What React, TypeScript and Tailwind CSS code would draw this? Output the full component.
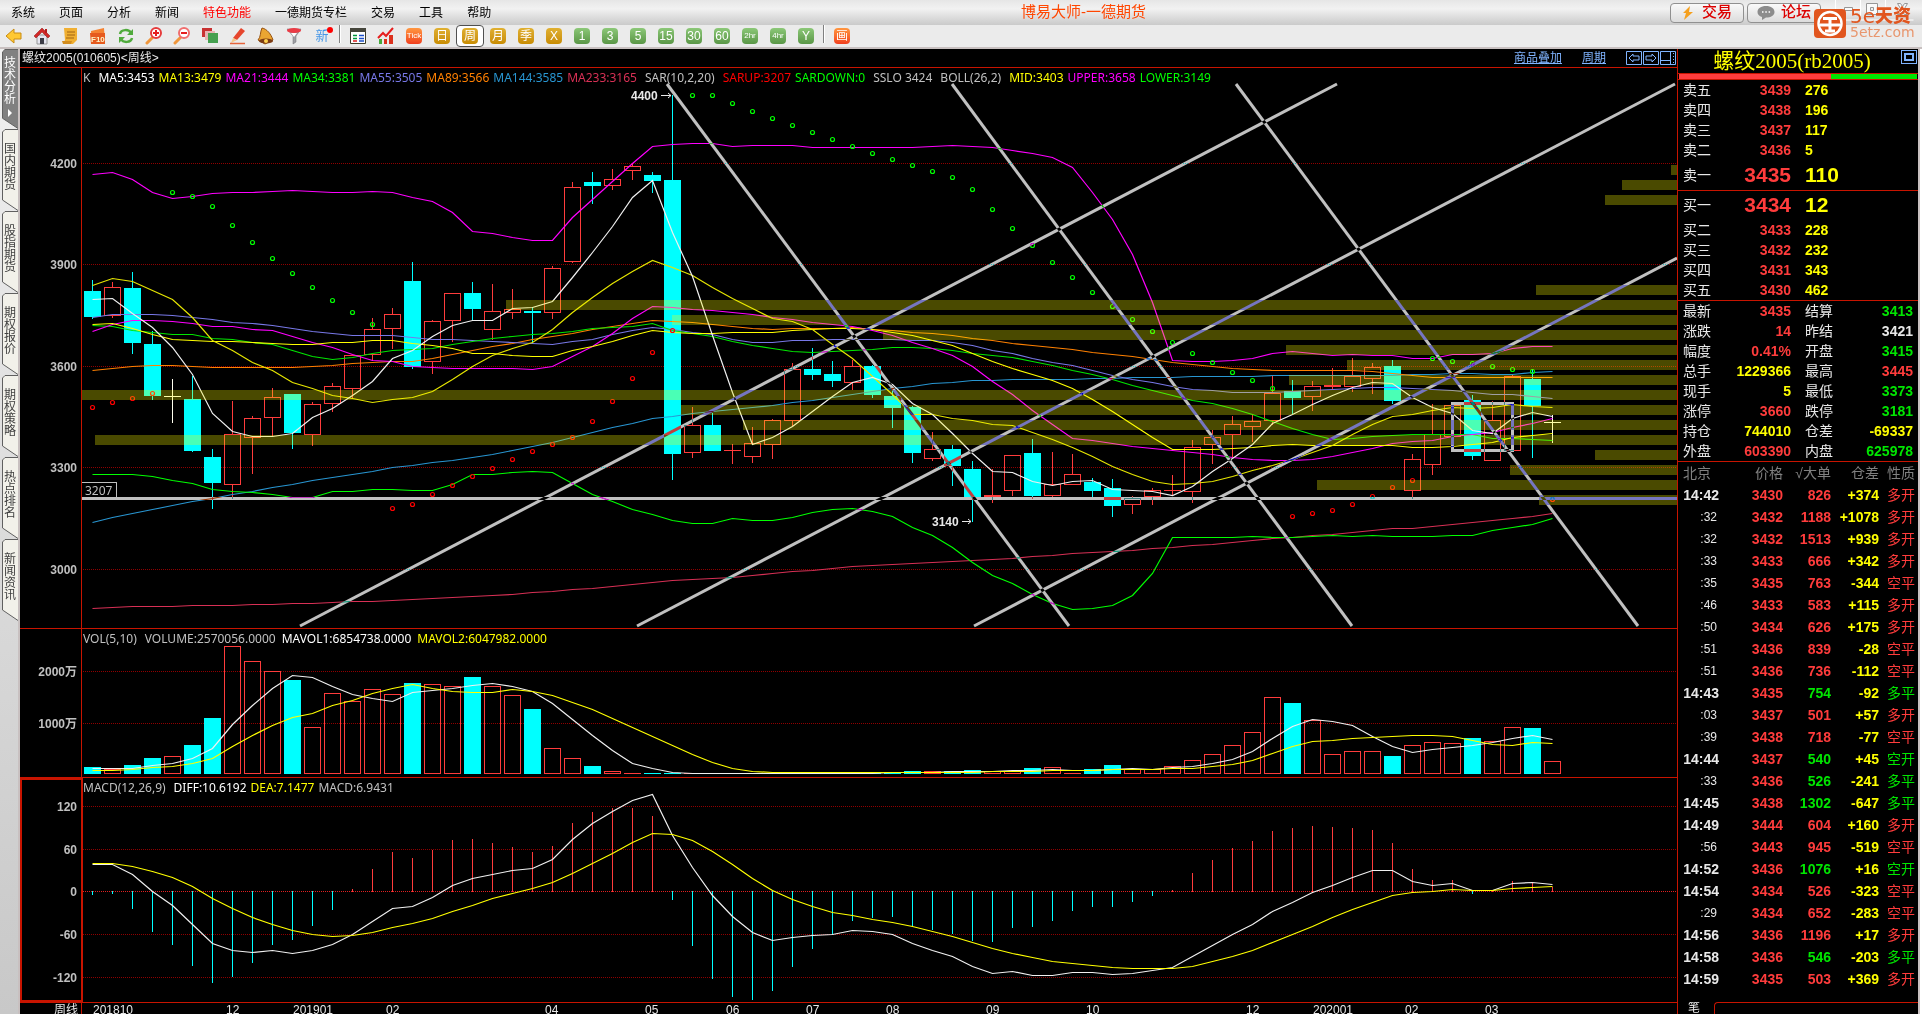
import type { ReactNode } from "react";
import clsx from "clsx";

const STEP = 20;
const FIRST_X = 92;

const xAt = (i: number) => FIRST_X + i * STEP;

/* u: rising, d: falling, f: flat; then high, body top, body bottom, low */
type Candle = ["u" | "d" | "f", number, number, number, number];

const candles: Candle[] = [
  ["d", 280, 291, 317, 319], ["u", 282, 287, 316, 318], ["d", 272, 288, 343, 354], ["d", 331, 344, 396, 400],
  ["f", 379, 396, 397, 423], ["d", 376, 399, 451, 452], ["d", 449, 457, 483, 509], ["u", 401, 434, 485, 499],
  ["u", 416, 418, 438, 474], ["u", 388, 397, 418, 437], ["d", 394, 394, 433, 449], ["u", 402, 404, 435, 446],
  ["u", 383, 386, 404, 412], ["u", 355, 355, 389, 398], ["u", 318, 329, 355, 361], ["u", 308, 314, 329, 349],
  ["d", 262, 281, 367, 369], ["u", 320, 321, 362, 374], ["u", 293, 293, 321, 342], ["d", 282, 293, 309, 321],
  ["u", 284, 311, 330, 340], ["u", 289, 309, 313, 319], ["d", 307, 311, 313, 343], ["u", 266, 268, 313, 319],
  ["u", 182, 187, 262, 263], ["d", 172, 182, 186, 204], ["u", 169, 179, 186, 190], ["u", 163, 166, 171, 180],
  ["d", 172, 175, 181, 193], ["d", 95, 180, 454, 480], ["u", 407, 425, 453, 458], ["d", 413, 425, 451, 451],
  ["u", 444, 450, 451, 464], ["u", 427, 443, 457, 463], ["u", 419, 420, 445, 459], ["u", 363, 369, 421, 426],
  ["d", 348, 369, 375, 380], ["d", 361, 374, 381, 387], ["u", 360, 366, 383, 390], ["d", 365, 366, 395, 398],
  ["d", 388, 396, 408, 428], ["d", 406, 407, 453, 463], ["u", 432, 449, 459, 461], ["d", 445, 449, 466, 486],
  ["d", 461, 469, 497, 522], ["u", 469, 495, 497, 503], ["u", 455, 455, 491, 496], ["d", 439, 453, 496, 499],
  ["u", 452, 484, 496, 497], ["u", 454, 474, 485, 485], ["d", 478, 482, 491, 497], ["d", 479, 488, 506, 517],
  ["u", 496, 498, 505, 514], ["u", 488, 490, 497, 505], ["u", 475, 490, 491, 495], ["u", 440, 447, 492, 503],
  ["u", 430, 437, 445, 464], ["u", 416, 424, 435, 457], ["u", 414, 421, 427, 442], ["u", 376, 393, 421, 425],
  ["d", 380, 391, 398, 414], ["u", 381, 386, 397, 411], ["u", 368, 385, 387, 389], ["u", 358, 376, 387, 392],
  ["u", 363, 367, 379, 394], ["d", 360, 366, 401, 404], ["u", 454, 459, 491, 499], ["u", 404, 434, 465, 475],
  ["u", 405, 405, 437, 437], ["d", 395, 400, 456, 460], ["u", 401, 420, 461, 461], ["u", 375, 376, 451, 451],
  ["d", 369, 379, 406, 458], ["f", 415, 422, 423, 443],
];

const ma5 = [
  299, 298, 313, 327, 347, 374, 413, 431, 436, 436,
  433, 417, 408, 395, 381, 358, 350, 336, 325, 320,
  320, 308, 307, 301, 277, 252, 226, 197, 180, 232,
  276, 335, 392, 444, 437, 426, 411, 396, 382, 377,
  384, 403, 414, 433, 453, 471, 472, 481, 485, 481,
  480, 489, 490, 491, 495, 486, 471, 458, 444, 423,
  414, 404, 395, 387, 382, 383, 397, 407, 413, 430,
  433, 418, 412, 416,
];
const ma13 = [
  285, 278, 281, 290, 299, 317, 340, 350, 362, 370,
  382, 388, 395, 398, 402, 399, 397, 391, 379, 366,
  355, 348, 342, 329, 312, 297, 283, 271, 260, 267,
  275, 287, 298, 308, 318, 321, 329, 344, 358, 376,
  394, 414, 414, 418, 420, 424, 425, 432, 439, 447,
  456, 466, 474, 481, 484, 483, 481, 476, 470, 465,
  459, 452, 445, 434, 424, 416, 414, 410, 407, 408,
  407, 404, 406, 407,
];
const mid = [
  324, 323, 328, 334, 339, 340, 341, 341, 342, 343,
  344, 344, 342, 342, 340, 340, 343, 345, 348, 353,
  353, 355, 356, 356, 350, 346, 341, 335, 330, 332,
  333, 333, 332, 332, 332, 330, 329, 328, 328, 329,
  332, 335, 340, 345, 353, 361, 368, 374, 380, 388,
  399, 411, 424, 437, 449, 449, 449, 448, 447, 445,
  444, 445, 445, 445, 445, 445, 447, 447, 446, 444,
  442, 437, 435, 433,
];
const ma21 = [
  331, 324, 320, 320, 321, 323, 326, 326, 329, 330,
  336, 342, 347, 354, 360, 361, 366, 367, 368, 368,
  368, 368, 369, 366, 356, 346, 333, 318, 306, 307,
  309, 310, 312, 314, 317, 319, 322, 324, 326, 330,
  335, 342, 348, 355, 366, 381, 394, 410, 424, 438,
  440, 443, 446, 448, 450, 452, 454, 457, 459, 460,
  460, 459, 456, 452, 448, 443, 441, 440, 436, 434,
  432, 427, 423, 418,
];
const ma34 = [
  325, 326, 330, 332, 334, 334, 338, 339, 342, 344,
  350, 356, 359, 357, 353, 350, 349, 348, 344, 341,
  338, 336, 334, 333, 331, 328, 327, 326, 323, 330,
  333, 336, 341, 345, 348, 351, 352, 351, 350, 349,
  347, 347, 348, 350, 353, 355, 357, 361, 365, 370,
  374, 379, 385, 390, 395, 400, 403, 408, 414, 421,
  428, 434, 439, 438, 436, 435, 434, 434, 434, 434,
  438, 438, 439, 440,
];
const ma55 = [
  317, 314, 314, 314, 315, 317, 319, 322, 323, 325,
  328, 331, 333, 335, 335, 335, 337, 339, 339, 340,
  341, 342, 343, 344, 341, 339, 334, 330, 327, 329,
  332, 334, 339, 342, 342, 340, 340, 339, 339, 339,
  339, 340, 340, 342, 345, 350, 353, 358, 362, 365,
  370, 375, 379, 382, 386, 389, 390, 392, 392, 392,
  391, 390, 389, 388, 387, 387, 388, 389, 390, 392,
  394, 394, 396, 398,
];
const ma89 = [
  370, 368, 366, 365, 365, 366, 367, 367, 367, 367,
  367, 366, 365, 363, 362, 361, 361, 358, 354, 350,
  346, 343, 339, 336, 333, 329, 326, 323, 320, 321,
  322, 324, 326, 328, 329, 328, 328, 328, 327, 329,
  330, 332, 333, 335, 338, 340, 343, 345, 347, 349,
  352, 354, 356, 359, 362, 364, 366, 368, 369, 370,
  370, 370, 370, 370, 371, 373, 375, 377, 377, 377,
  377, 377, 377, 377,
];
const ma144 = [
  522, 517, 513, 509, 505, 501, 498, 494, 491, 487,
  484, 480, 477, 474, 471, 467, 465, 462, 460, 457,
  454, 450, 446, 442, 437, 432, 427, 423, 418, 416,
  413, 411, 409, 407, 405, 402, 400, 397, 394, 391,
  388, 386, 383, 382, 380, 380, 379, 379, 379, 379,
  378, 378, 377, 377, 377, 376, 376, 376, 376, 375,
  375, 375, 375, 375, 375, 375, 374, 374, 373, 373,
  374, 374, 372, 371,
];
const ma233 = [
  608, 607, 606, 606, 606, 605, 605, 605, 604, 604,
  603, 603, 602, 601, 601, 600, 599, 598, 597, 596,
  595, 594, 592, 591, 589, 588, 586, 584, 582, 580,
  579, 578, 577, 575, 573, 571, 570, 568, 566, 565,
  564, 563, 562, 561, 560, 559, 558, 556, 555, 553,
  552, 551, 550, 548, 547, 545, 544, 542, 540, 538,
  537, 535, 534, 532, 530, 528, 528, 526, 524, 522,
  520, 518, 516, 513,
];
const upper = [
  174, 172, 179, 192, 198, 196, 193, 192, 192, 191,
  190, 191, 192, 192, 191, 192, 197, 201, 212, 231,
  233, 237, 240, 240, 217, 199, 181, 163, 146, 144,
  143, 143, 146, 145, 145, 145, 147, 147, 147, 147,
  147, 147, 146, 145, 146, 147, 150, 153, 157, 167,
  192, 219, 254, 302, 360, 361, 361, 360, 358, 353,
  351, 353, 355, 354, 355, 355, 358, 358, 354, 354,
  353, 348, 346, 346,
];
const lower = [
  474, 474, 474, 476, 480, 483, 489, 491, 492, 494,
  497, 497, 491, 491, 489, 489, 490, 490, 484, 474,
  474, 472, 471, 472, 483, 494, 501, 509, 514, 520,
  523, 523, 518, 520, 520, 517, 512, 509, 508, 511,
  516, 527, 535, 547, 562, 575, 583, 594, 603, 609,
  608, 605, 595, 573, 537, 537, 537, 537, 536, 537,
  537, 536, 535, 536, 535, 536, 536, 536, 535, 535,
  530, 527, 524, 518,
];

/* SAR dots: [candle index, y] */
const sarGreen: [number, number[]][] = [
  [4, [192, 196, 206, 225, 242, 258, 273, 287, 300, 312, 324]],
  [30, [
    95, 95, 103, 111, 118, 125, 132, 139, 146, 153, 159, 165, 171, 177, 189,
    209, 228, 245, 262, 277, 292, 306, 319, 331, 342, 353, 362, 372, 380, 388,
  ]],
  [67, [358, 361, 363, 366, 369, 371]],
];
const sarRed: [number, number[]][] = [
  [0, [407, 402, 398, 393]],
  [15, [508, 504, 494, 485, 476, 468, 459, 451, 444, 437, 421, 401, 378, 352, 330]],
  [60, [516, 513, 510, 504, 496, 487, 480]],
  [73, [499]],
];

/* Volume profile at the right edge: [y, left edge] */
const profile: [number, number][] = [
  [165, 1671], [180, 1622], [195, 1605], [285, 1536], [300, 506], [315, 672],
  [330, 883], [345, 1286], [360, 1347], [375, 1289], [390, 82], [405, 681],
  [420, 743], [435, 95], [450, 1595], [465, 1510], [480, 1317], [495, 1539],
];

const volumeTops = [
  767, 769, 765, 758, 756, 745, 718, 646, 661, 671,
  680, 727, 693, 701, 689, 694, 683, 684, 686, 677,
  686, 695, 709, 748, 758, 766, 771, 773, 773, 773,
  773, 773, 773, 773, 773, 773, 773, 773, 773, 773,
  772, 771, 771, 771, 770, 771, 771, 768, 767, 773,
  769, 765, 769, 769, 766, 760, 754, 745, 732, 697,
  703, 720, 754, 751, 751, 756, 745, 742, 743, 738,
  741, 727, 728, 761,
];
const mavol1 = [
  768, 768, 768, 765, 763, 758, 748, 724, 705, 688,
  675, 677, 686, 694, 698, 701, 692, 690, 688, 685,
  683, 686, 691, 703, 719, 735, 750, 763, 768, 772,
  773, 773, 773, 773, 773, 773, 773, 773, 773, 773,
  772, 772, 772, 771, 771, 771, 770, 770, 769, 770,
  770, 769, 768, 769, 767, 766, 763, 759, 751, 738,
  726, 719, 721, 725, 736, 746, 752, 749, 747, 745,
  742, 738, 735, 739,
];
const mavol2 = [
  770, 770, 769, 767, 766, 763, 758, 746, 735, 725,
  717, 713, 705, 700, 693, 688, 684, 688, 691, 692,
  692, 689, 691, 695, 702, 709, 718, 727, 736, 745,
  754, 762, 768, 771, 772, 772, 772, 772, 772, 772,
  772, 772, 772, 772, 772, 771, 771, 771, 770, 770,
  770, 769, 769, 769, 768, 768, 766, 764, 760, 753,
  746, 741, 740, 738, 737, 736, 735, 735, 736, 740,
  744, 745, 742, 743,
];

const MACD_ZERO = 891;
const macd = [
  894, 893, 908, 931, 944, 965, 982, 976, 962, 944,
  939, 925, 909, 889, 869, 852, 858, 850, 840, 839,
  843, 847, 852, 846, 823, 812, 808, 808, 816, 899,
  945, 978, 996, 999, 990, 966, 948, 934, 920, 917,
  916, 926, 929, 933, 940, 941, 927, 926, 920, 910,
  906, 901, 895, 890, 873, 860, 848, 841, 831, 828,
  826, 827, 828, 830, 843, 869, 880, 880, 893, 892,
  881, 882, 887, 887,
];
const diff = [
  864, 864, 874, 891, 905, 924, 943, 950, 952, 950,
  953, 950, 944, 934, 921, 908, 906, 897, 885, 878,
  874, 870, 868, 859, 839, 823, 811, 800, 794, 835,
  867, 895, 916, 932, 940, 937, 935, 934, 930, 931,
  934, 943, 950, 956, 966, 973, 971, 975, 975, 972,
  972, 974, 973, 970, 967, 956, 945, 934, 924, 911,
  902, 892, 885, 877, 870, 870, 881, 885, 883, 890,
  890, 883, 882, 884,
];
const dea = [
  863, 863, 866, 871, 877, 886, 898, 908, 917, 924,
  930, 934, 936, 935, 932, 927, 923, 918, 911, 905,
  898, 893, 888, 882, 873, 863, 853, 842, 833, 834,
  840, 851, 864, 878, 890, 899, 906, 912, 915, 919,
  922, 926, 931, 936, 942, 948, 953, 957, 961, 963,
  965, 967, 968, 968, 968, 966, 961, 956, 950, 942,
  934, 926, 917, 909, 902, 895, 892, 891, 889, 890,
  890, 888, 887, 886,
];
/* bars from the 51st week on, where the histogram turns positive again */
const macdTail = [906, 901, 895, 890, 873, 860, 848, 841, 831, 828, 826, 827, 828, 830, 843, 869, 880, 880, 893, 891, 881, 882, 887];
const histogram = [...macd.slice(0, 51), ...macdTail];

const months: [number, string][] = [
  [93, "201810"], [226, "12"], [293, "201901"], [386, "02"], [545, "04"],
  [645, "05"], [726, "06"], [806, "07"], [886, "08"], [986, "09"],
  [1086, "10"], [1246, "12"], [1313, "202001"], [1405, "02"], [1485, "03"],
];

const menu = ["系统", "页面", "分析", "新闻", "特色功能", "一德期货专栏", "交易", "工具", "帮助"];
const sideTabs = ["国内期货", "股指期货", "期权报价", "期权策略", "热点排名", "新闻资讯"];

const RED = "text-[#ff3c3c]";
const GREEN = "text-[#00e600]";
const YELLOW = "text-[#ffff00]";
const WHITE = "text-[#e8e8e8]";

const asks: [string, string, string][] = [
  ["卖五", "3439", "276"],
  ["卖四", "3438", "196"],
  ["卖三", "3437", "117"],
  ["卖二", "3436", "5"],
];
const bids: [string, string, string][] = [
  ["买二", "3433", "228"],
  ["买三", "3432", "232"],
  ["买四", "3431", "343"],
  ["买五", "3430", "462"],
];

const stats: [string, string, string, string, string, string][] = [
  ["最新", "3435", RED, "结算", "3413", GREEN],
  ["涨跌", "14", RED, "昨结", "3421", WHITE],
  ["幅度", "0.41%", RED, "开盘", "3415", GREEN],
  ["总手", "1229366", YELLOW, "最高", "3445", RED],
  ["现手", "5", YELLOW, "最低", "3373", GREEN],
  ["涨停", "3660", RED, "跌停", "3181", GREEN],
  ["持仓", "744010", YELLOW, "仓差", "-69337", YELLOW],
  ["外盘", "603390", RED, "内盘", "625978", GREEN],
];

/* time, price, size, position change, kind */
const ticks: [string, string, string, string, string][] = [
  ["14:42", "3430", "826", "+374", "多开"],
  [":32", "3432", "1188", "+1078", "多开"],
  [":32", "3432", "1513", "+939", "多开"],
  [":33", "3433", "666", "+342", "多开"],
  [":35", "3435", "763", "-344", "空平"],
  [":46", "3433", "583", "+115", "多开"],
  [":50", "3434", "626", "+175", "多开"],
  [":51", "3436", "839", "-28", "空平"],
  [":51", "3436", "736", "-112", "空平"],
  ["14:43", "3435", "754", "-92", "多平"],
  [":03", "3437", "501", "+57", "多开"],
  [":39", "3438", "718", "-77", "空平"],
  ["14:44", "3437", "540", "+45", "空开"],
  [":33", "3436", "526", "-241", "多平"],
  ["14:45", "3438", "1302", "-647", "多平"],
  ["14:49", "3444", "604", "+160", "多开"],
  [":56", "3443", "945", "-519", "空平"],
  ["14:52", "3436", "1076", "+16", "空开"],
  ["14:54", "3434", "526", "-323", "空平"],
  [":29", "3434", "652", "-283", "空平"],
  ["14:56", "3436", "1196", "+17", "多开"],
  ["14:58", "3436", "546", "-203", "多平"],
  ["14:59", "3435", "503", "+369", "多开"],
];

function Curve({ data, color }: { data: number[]; color: string }) {
  const points = data.map((y, i) => `${xAt(i) + 0.5},${y + 0.5}`).join(" ");
  return <polyline points={points} fill="none" stroke={color} strokeWidth="1.2" />;
}

function GridLine({ y, label, color = "#900000" }: { y: number; label: string; color?: string }) {
  return (
    <>
      <line x1="83" x2="1677" y1={y + 0.5} y2={y + 0.5} stroke={color} strokeDasharray="1 1" shapeRendering="crispEdges" />
      <text x="77" y={y + 5} textAnchor="end" fill="#c0c0c0" fontSize="12" fontWeight="bold">
        {label}
      </text>
    </>
  );
}

function CandleShape({ i, candle }: { i: number; candle: Candle }) {
  const [kind, high, top, bottom, low] = candle;
  const x = xAt(i);
  if (kind === "f") {
    return (
      <g fill="#fffff0">
        <rect x={x} y={high} width="1" height={low - high} />
        <rect x={x - 8} y={top} width="17" height="1" />
      </g>
    );
  }
  if (kind === "d") {
    return (
      <g fill="#00ffff">
        <rect x={x} y={high} width="1" height={low - high} />
        <rect x={x - 8} y={top} width="17" height={bottom - top} />
      </g>
    );
  }
  return (
    <g fill="#ff3c3c">
      <rect x={x} y={high} width="1" height={top - high} />
      <rect x={x} y={bottom} width="1" height={Math.max(low - bottom, 0)} />
      <rect x={x - 7.5} y={top + 0.5} width="16" height={Math.max(bottom - top - 1, 0.1)} fill="none" stroke="#ff3c3c" />
    </g>
  );
}

function Dots({ runs, color }: { runs: [number, number[]][]; color: string }) {
  return (
    <g fill="none" stroke={color} strokeWidth="1.2">
      {runs.map(([start, ys]) =>
        ys.map((y, k) => <circle key={start + k} cx={xAt(start + k) + 0.5} cy={y + 0.5} r="2" />),
      )}
    </g>
  );
}

function PricePane() {
  return (
    <svg className="block h-full w-full" viewBox="20 68 1657 560" preserveAspectRatio="none">
      <GridLine y={163} label="4200" />
      <GridLine y={264} label="3900" />
      <GridLine y={366} label="3600" />
      <GridLine y={467} label="3300" />
      <GridLine y={569} label="3000" />
      <g shapeRendering="crispEdges">
        {candles.map((c, i) => (
          <CandleShape key={i} i={i} candle={c} />
        ))}
      </g>
      <Curve data={ma233} color="#d83055" />
      <Curve data={ma144} color="#2896d2" />
      <Curve data={ma89} color="#ff8000" />
      <Curve data={ma55} color="#7878e8" />
      <Curve data={ma34} color="#00e600" />
      <Curve data={ma21} color="#ff00ff" />
      <Curve data={mid} color="#ffff00" />
      <Curve data={ma13} color="#e6e600" />
      <Curve data={ma5} color="#f0f0f0" />
      <Curve data={upper} color="#ff00ff" />
      <Curve data={lower} color="#00ff00" />
      <Dots runs={sarGreen} color="#00ff00" />
      <Dots runs={sarRed} color="#ff0000" />
      <g fill="#ffff00" fillOpacity="0.29" shapeRendering="crispEdges">
        {profile.map(([y, x]) => (
          <rect key={y} x={x} y={y} width={1677 - x} height="10" />
        ))}
      </g>
      <g fill="none" stroke="#c0c0c0" strokeWidth="3">
        {/* each drawn line inverts what lies under it */}
        <path className="mix-blend-difference" d="M81 498.5H1677" />
        <path className="mix-blend-difference" d="M667 84L1069 626" />
        <path className="mix-blend-difference" d="M952 84L1352 626" />
        <path className="mix-blend-difference" d="M1236 84L1638 626" />
        <path className="mix-blend-difference" d="M300 626L1337 84" />
        <path className="mix-blend-difference" d="M637 626L1675 84" />
        <path className="mix-blend-difference" d="M974 626L1677 258" />
        <rect className="mix-blend-difference" x="1452.5" y="403.5" width="60" height="47" />
      </g>
      <rect x="81.5" y="482.5" width="35" height="15" fill="#000" stroke="#c0c0c0" />
      <text x="85" y="495" fill="#c0c0c0" fontSize="12" className="font-['Noto_Sans']">3207</text>
      <g fill="#e8e8e8" fontSize="12" fontWeight="bold">
        <text x="631" y="100">4400</text>
        <text x="932" y="526">3140</text>
      </g>
      <path d="M661 95.5h10M668 93l3 2.5l-3 2.5M962 521.5h9M968 519l3 2.5l-3 2.5" fill="none" stroke="#e8e8e8" />
      <path d="M81.5 68V628" stroke="#c81400" />
    </svg>
  );
}

function VolumePane() {
  return (
    <svg className="block h-full w-full" viewBox="20 629 1657 148" preserveAspectRatio="none">
      <GridLine y={671} label="2000万" />
      <GridLine y={723} label="1000万" />
      <g shapeRendering="crispEdges">
        {volumeTops.map((y, i) =>
          candles[i][0] === "d" ? (
            <rect key={i} x={xAt(i) - 8} y={y} width="17" height={774 - y} fill="#00ffff" />
          ) : (
            <rect key={i} x={xAt(i) - 7.5} y={y + 0.5} width="16" height={Math.max(773 - y, 0.1)} fill="none" stroke="#ff3c3c" />
          ),
        )}
      </g>
      <Curve data={mavol1} color="#f0f0f0" />
      <Curve data={mavol2} color="#ffff00" />
      <path d="M81.5 629V777" stroke="#c81400" />
    </svg>
  );
}

function MacdPane() {
  return (
    <svg className="block h-full w-full" viewBox="20 778 1657 224" preserveAspectRatio="none">
      <GridLine y={806} label="120" />
      <GridLine y={849} label="60" />
      <GridLine y={MACD_ZERO} label="0" color="#e02020" />
      <GridLine y={934} label="-60" />
      <GridLine y={977} label="-120" />
      <g shapeRendering="crispEdges">
        {histogram.map((y, i) => (
          <rect
            key={i}
            x={xAt(i)}
            y={Math.min(y, MACD_ZERO)}
            width="1"
            height={Math.abs(y - MACD_ZERO) + 1}
            fill={y > MACD_ZERO ? "#00ffff" : "#ff3c3c"}
          />
        ))}
      </g>
      <Curve data={diff} color="#f0f0f0" />
      <Curve data={dea} color="#ffff00" />
      <rect x="21" y="779" width="61" height="222" fill="none" stroke="#c81400" strokeWidth="2" />
    </svg>
  );
}

function Legend({ items }: { items: [string, string][] }) {
  return (
    <div className="absolute left-[63px] top-0 flex h-5 items-center gap-1 whitespace-nowrap font-['Noto_Sans',sans-serif] text-[12px]">
      {items.map(([text, cls]) => (
        <span key={text} className={cls}>
          {text}
        </span>
      ))}
    </div>
  );
}

const priceLegend: [string, string][] = [
  ["K", "text-[#c0c0c0] mr-1"],
  ["MA5:3453", "text-white"],
  ["MA13:3479", "text-[#ffff00]"],
  ["MA21:3444", "text-[#ff00ff]"],
  ["MA34:3381", "text-[#00ff00]"],
  ["MA55:3505", "text-[#7878e8]"],
  ["MA89:3566", "text-[#ff8000]"],
  ["MA144:3585", "text-[#2896d2]"],
  ["MA233:3165", "text-[#d83055]"],
  ["SAR(10,2,20)", "text-[#c0c0c0] mx-1"],
  ["SARUP:3207", "text-[#ff0000]"],
  ["SARDOWN:0", "text-[#00ff00]"],
  ["SSLO 3424", "text-[#c0c0c0] mx-1"],
  ["BOLL(26,2)", "text-[#c0c0c0] mr-1"],
  ["MID:3403", "text-[#ffff00]"],
  ["UPPER:3658", "text-[#ff00ff]"],
  ["LOWER:3149", "text-[#00ff00]"],
];

function Glyph({ children }: { children: ReactNode }) {
  return (
    <svg className="size-[18px]" viewBox="0 0 18 18">
      {children}
    </svg>
  );
}

const tools: [string, ReactNode][] = [
  ["后退", <path d="M1 9l8-7v4h7v6H9v4z" fill="#ffc832" stroke="#c88c14" />],
  ["主页", <><path d="M4 8h10v9H4z" fill="#e6e6f0" stroke="#969696" /><path d="M1 9l8-8 8 8-2 2-6-6-6 6z" fill="#d22828" stroke="#8c1414" strokeWidth=".5" /><path d="M12 2h2v4h-2z" fill="#b41e1e" /><path d="M7 11h4v6H7z" fill="#3c3c46" /></>],
  ["公告", <><path d="M3 1h13v12l-4 4H2l2-4z" fill="#f0af32" /><path d="M6 5h8M6 8h8M5 11h8" stroke="#a06414" /><path d="M1 14h10l-1 3H2z" fill="#d28c1e" /></>],
  ["F10", <><path d="M2 4l13-3 1 14-13 2z" fill="#f58232" /><path d="M1 6h15v11H2z" fill="#e65a1e" /><text x="2" y="15" fontSize="8" fontWeight="bold" fill="#fff5c8">F10</text></>],
  ["刷新", <><path d="M3 7c1-5 9-5 11-1M15 11c-1 5-9 5-11 1" fill="none" stroke="#50aa3c" strokeWidth="2.5" /><path d="M16 2v6h-6zM2 16v-6h6z" fill="#50aa3c" /></>],
  ["放大", <><path d="M2 16l5-5" stroke="#f0963c" strokeWidth="3" strokeLinecap="round" /><circle cx="11" cy="6" r="5" fill="#fff" stroke="#e63c3c" strokeWidth="2" /><path d="M8 6h6M11 3v6" stroke="#e61e1e" strokeWidth="2" /></>],
  ["缩小", <><path d="M2 16l5-5" stroke="#f0963c" strokeWidth="3" strokeLinecap="round" /><circle cx="11" cy="6" r="5" fill="#fff" stroke="#f06e6e" strokeWidth="2" /><path d="M8 6h6" stroke="#e61e1e" strokeWidth="2" /></>],
  ["叠加", <><path d="M1 1h10v9H1z" fill="#c83232" /><path d="M4 4h10v9H4z" fill="#e6b4b4" /><path d="M7 6h10v10H7z" fill="#46a050" /></>],
  ["画线", <><path d="M4 11L12 1l4 3-8 9z" fill="#e6462d" /><path d="M4 11l-2 5 6-3z" fill="#f5c88c" /><path d="M1 16.500h15" stroke="#e6643c" strokeWidth="1.500" /></>],
  ["预警", <><path d="M5 1c5 1 9 6 11 12l-8 4-7-4c3-3 2-8 4-12z" fill="#eba532" stroke="#96500f" /><ellipse cx="9" cy="14" rx="7" ry="2.500" fill="#7d3c14" /><circle cx="9" cy="14" r="2" fill="#ffd250" /></>],
  ["选股", <><path d="M2 2h14l-5 7v6l-3 2V9z" fill="#a0a0a5" stroke="#6e6e73" strokeWidth=".5" /><ellipse cx="9" cy="3.500" rx="7" ry="2.500" fill="#eb3c46" /><path d="M6 6h6l-3 4z" fill="#fff" /></>],
];

const periods: [string, string][] = [
  ["日", "gold"], ["周", "gold"], ["月", "gold"], ["季", "gold"], ["X", "gold"],
  ["1", "green"], ["3", "green"], ["5", "green"], ["15", "green"], ["30", "green"],
  ["60", "green"], ["2hr", "green"], ["4hr", "green"], ["Y", "green"],
];

function Chip({ label, tone }: { label: string; tone: string }) {
  return (
    <span
      className={clsx(
        "flex h-4 w-4 items-center justify-center rounded-sm leading-4 text-white",
        label.length > 2 ? "text-[8px]" : "text-[12px]",
        tone === "gold" && "bg-linear-to-b from-[#e0b030] to-[#c88c00]",
        tone === "green" && "bg-linear-to-b from-[#8cc878] to-[#5a9646]",
        tone === "red" && "bg-linear-to-b from-[#ff9640] to-[#f03c1e]",
      )}>
      {label}
    </span>
  );
}

function ToolButton({ label, active, children }: { label: string; active?: boolean; children: ReactNode }) {
  return (
    <button
      type="button"
      aria-label={label}
      className={clsx(
        "flex h-[22px] w-7 items-center justify-center",
        active && "rounded border border-[#505050] bg-white",
      )}>
      {children}
    </button>
  );
}

function Divider() {
  return <span className="mx-[3px] h-[18px] w-[2px] border-l border-[#808080] bg-white" />;
}

function MenuBar() {
  return (
    <header className="relative flex h-[25px] shrink-0 items-center justify-between bg-linear-to-b from-[#e6e6e6] via-[#f2f2f2] via-35% to-[#cacaca]">
      <nav className="flex gap-6 pl-[11px] text-[12px] text-black">
        {menu.map((m) => (
          <button type="button" key={m} className={m === "特色功能" ? "text-[#ff0000]" : ""}>
            {m}
          </button>
        ))}
      </nav>
      <h1 className="absolute left-1/2 ml-[60px] text-[15px] text-[#ff4600]">博易大师-一德期货</h1>
      <div className="flex h-full items-center gap-[3px] pr-[2px]">
        <button type="button" className="flex h-5 w-[74px] items-center justify-center gap-2 rounded border border-[#909090] bg-linear-to-b from-[#fafafa] to-[#dcdcdc] text-[15px] font-medium text-[#dc0000]">
          <svg className="h-3.5 w-3" viewBox="0 0 12 14">
            <path d="M8 0L1 7h3l-2 7 9-8H7z" fill="#f5a01e" />
          </svg>
          交易
        </button>
        <button type="button" className="flex h-5 w-[74px] items-center justify-center gap-1.5 rounded border border-[#909090] bg-linear-to-b from-[#fafafa] to-[#dcdcdc] text-[15px] font-medium text-[#dc0000]">
          <svg className="h-3.5 w-[18px]" viewBox="0 0 18 14">
            <path d="M9 0c5 0 8.500 2.500 8.500 6S14 11.500 9 11.500L5 14v-3C2 10 .5 8.500 .5 6 .5 2.500 4 0 9 0z" fill="#8c8c8c" />
            <path d="M5 6h1.500M8.300 6h1.500M11.600 6h1.500" stroke="#fff" strokeWidth="1.500" />
          </svg>
          论坛
        </button>
        <svg className="ml-2 h-[25px] w-[88px]" viewBox="0 0 88 25">
          <g fill="none" stroke="#fff">
            <path d="M3.500 0v20h78M28.500 0v20M53.500 0v20" />
          </g>
          <g fill="#fafafa" stroke="#969696">
            <path d="M12.500 7.500h8v3h-8z" />
            <path d="M34.500 3.500h11v11h-11zM38.500 7.500h3v3h-3z" fillRule="evenodd" />
            <path d="M65.500 3.500h3l2 3 2-3h3l-3 5 3 6h-3l-2-3-2 3h-3l3-6z" />
          </g>
        </svg>
      </div>
      <div className="absolute right-1 top-[8px] z-10 flex items-start gap-1">
        <svg className="size-8" viewBox="0 0 32 32">
          <rect y="1" width="32" height="29" rx="4" fill="#e1551e" />
          <circle cx="16" cy="15.500" r="11.500" fill="none" stroke="#fff" strokeWidth="2.500" />
          <path d="M9 10.500h14M6 17h20M16 10.500V23M11 23h10" stroke="#fff" strokeWidth="3" />
        </svg>
        <div className="flex w-[68px] flex-col">
          <span className="flex items-center whitespace-nowrap leading-[17px] text-[#e1551e]">
            <span className="font-['DejaVu_Sans',sans-serif] text-[20px]">5e</span>
            <span className="text-[18px] font-black">天资</span>
          </span>
          <span className="font-['DejaVu_Sans',sans-serif] text-[14px] leading-[14px] text-[#e8966e]">5etz.com</span>
        </div>
      </div>
    </header>
  );
}

function ToolBar() {
  return (
    <div className="flex h-6 shrink-0 items-start border-b-2 border-[#c8c0c0] bg-[#ebebeb]">
      {tools.map(([label, art]) => (
        <ToolButton key={label} label={label}>
          <Glyph>{art}</Glyph>
        </ToolButton>
      ))}
      <ToolButton label="新">
        <span className="relative text-[13px] leading-4 text-[#4696e6]">
          新
          <i className="absolute -right-1 -top-px size-1.5 rounded-full bg-[#ff0000]" />
        </span>
      </ToolButton>
      <Divider />
      <ToolButton label="报价">
        <Glyph>
          <path d="M1.500 1.500h15v15h-15z" fill="#fff" stroke="#3c3c28" />
          <path d="M1 1h16v4H1z" fill="#46463c" />
          <path d="M4 8.500h4M4 11.500h4" stroke="#00963c" strokeWidth="1.500" />
          <path d="M10 8.500h5M10 11.500h5M10 14h5" stroke="#1e50c8" strokeWidth="1.500" />
          <path d="M4 14h4" stroke="#dc1e1e" strokeWidth="1.500" />
        </Glyph>
      </ToolButton>
      <ToolButton label="走势">
        <Glyph>
          <path d="M2 12h3v5H2z" fill="#46aa3c" />
          <path d="M7 12h3v5H7zM12 8h4v9h-4z" fill="#dc321e" />
          <path d="M1 11l5-5 3 3 7-8" fill="none" stroke="#e61e1e" strokeWidth="2" />
        </Glyph>
      </ToolButton>
      <ToolButton label="Tick">
        <Chip label="Tick" tone="red" />
      </ToolButton>
      {periods.map(([label, tone]) => (
        <ToolButton key={label} label={label} active={label === "周"}>
          <Chip label={label} tone={tone} />
        </ToolButton>
      ))}
      <Divider />
      <ToolButton label="画">
        <Chip label="画" tone="red" />
      </ToolButton>
    </div>
  );
}

function SideTab({ label, active }: { label: string; active?: boolean }) {
  return (
    <button
      type="button"
      className={clsx(
        "relative flex w-4 shrink-0 flex-col items-center",
        active ? "h-20 pt-2 text-white" : "h-[82px] pt-3.5 text-[#404040]",
      )}>
      <svg className="absolute inset-0 h-full w-full" viewBox="0 0 16 82" preserveAspectRatio="none">
        <path
          d="M16 .5H3L.5 3V71L16 81.500"
          fill={active ? "#808080" : "#f2f1ea"}
          stroke="#606060"
        />
      </svg>
      <span className="relative w-3 break-all text-[12px] leading-[12px]">{label}</span>
      {active && (
        <svg className="relative mt-1 h-2 w-1.5" viewBox="0 0 6 8">
          <path d="M1 0l4 4-4 4z" fill="#fff" />
        </svg>
      )}
    </button>
  );
}

function BookRow({ row, big }: { row: [string, string, string]; big?: boolean }) {
  const [label, price, size] = row;
  return (
    <tr className={big ? "h-[30px]" : "h-5"}>
      <th scope="row" className="p-0 pl-[5px] text-left font-normal text-[#e8e8e8]">{label}</th>
      <td className={clsx("p-0 text-right font-bold text-[#ff3c3c]", big && "text-[21px]")}>{price}</td>
      <td className={clsx("p-0 pl-[14px] font-bold text-[#ffff00]", big && "text-[21px]")}>{size}</td>
    </tr>
  );
}

function QuotePanel() {
  return (
    <aside className="flex w-[245px] shrink-0 border-r-2 border-white">
      <div className="flex min-w-0 flex-1 flex-col border-l border-r-2 border-l-[#c81400] border-r-[#c8c0c0] bg-black text-[14px] leading-5">
        <div className="relative flex h-6 shrink-0 items-center justify-center">
          <h2 className="pr-3 font-['Liberation_Serif','Noto_Sans_CJK_SC',serif] text-[21px] text-[#ffff00]">螺纹2005(rb2005)</h2>
          <button type="button" aria-label="最大化" className="absolute right-px top-px h-3.5 w-4 border border-[#80b4ff] p-[2px]">
            <span className="block h-full w-full border-2 border-[#80b4ff]" />
          </button>
        </div>
        <div className="flex h-[7px] shrink-0 border-y border-[#c81400] px-px">
          <span className="w-[64%] bg-[#ff3c3c]" />
          <span className="flex-1 bg-[#00e600]" />
        </div>
        <table className="w-full shrink-0 table-fixed border-collapse">
          <colgroup>
            <col className="w-[40px]" />
            <col className="w-[73px]" />
            <col />
          </colgroup>
          <tbody>
            {asks.map((r) => (
              <BookRow key={r[0]} row={r} />
            ))}
            <BookRow row={["卖一", "3435", "110"]} big />
          </tbody>
          <tbody className="border-y border-[#c81400]">
            <BookRow row={["买一", "3434", "12"]} big />
            {bids.map((r) => (
              <BookRow key={r[0]} row={r} />
            ))}
          </tbody>
        </table>
        <table className="w-full shrink-0 table-fixed border-collapse">
          <colgroup>
            <col className="w-[40px]" />
            <col className="w-[73px]" />
            <col className="w-[52px]" />
            <col />
          </colgroup>
          <tbody>
            {stats.map(([l1, v1, c1, l2, v2, c2]) => (
              <tr key={l1} className="h-5">
                <th scope="row" className="p-0 pl-[5px] text-left font-normal text-[#e8e8e8]">{l1}</th>
                <td className={clsx("p-0 text-right font-bold", c1)}>{v1}</td>
                <th scope="row" className="p-0 pl-[14px] text-left font-normal text-[#e8e8e8]">{l2}</th>
                <td className={clsx("p-0 pr-[5px] text-right font-bold", c2)}>{v2}</td>
              </tr>
            ))}
          </tbody>
        </table>
        <table className="w-full shrink-0 table-fixed border-collapse border-t border-[#c81400]">
          <colgroup>
            <col className="w-[42px]" />
            <col className="w-[63px]" />
            <col className="w-[48px]" />
            <col className="w-[48px]" />
            <col />
          </colgroup>
          <thead>
            <tr className="h-[22px] whitespace-nowrap text-right text-[#808080]">
              <th className="p-0 pl-[5px] text-left font-normal">北京</th>
              <th className="p-0 font-normal">价格</th>
              <th className="p-0 font-normal">√大单</th>
              <th className="p-0 font-normal">仓差</th>
              <th className="p-0 pr-[3px] font-normal">性质</th>
            </tr>
          </thead>
          <tbody>
            {ticks.map(([time, price, size, chg, kind], i) => {
              const tone = kind === "多平" || kind === "空开" ? GREEN : RED;
              return (
                <tr key={i} className="h-[22px] text-right font-bold">
                  <td className={clsx("p-0 text-[#e8e8e8]", time.length > 3 ? "pr-px" : "pr-[3px] text-[12px] font-normal")}>{time}</td>
                  <td className="p-0 text-[#ff3c3c]">{price}</td>
                  <td className={clsx("p-0", tone)}>{size}</td>
                  <td className="p-0 text-[#ffff00]">{chg}</td>
                  <td className={clsx("p-0 pr-[3px] font-normal", tone)}>{kind}</td>
                </tr>
              );
            })}
          </tbody>
        </table>
        <div className="mt-auto flex h-3 shrink-0 overflow-hidden text-[12px] leading-3 text-[#e8e8e8]">
          <button type="button" className="h-3 w-9 pr-1">笔</button>
          <span className="flex-1 rounded-tl-sm border-l border-t border-[#c81400]" />
        </div>
      </div>
    </aside>
  );
}

export default function App() {
  return (
    <div className="flex h-screen flex-col overflow-hidden bg-black font-['Liberation_Sans','Noto_Sans_CJK_SC',sans-serif]">
      <MenuBar />
      <ToolBar />
      <div className="flex min-h-0 flex-1">
        <div className="flex w-5 shrink-0 flex-col overflow-hidden border-r-2 border-[#c8c0c0] bg-linear-to-b from-[#f0f0f0] to-[#c8c8c8] pl-0.5">
          <SideTab label="技术分析" active />
          {sideTabs.map((t) => (
            <SideTab key={t} label={t} />
          ))}
        </div>
        <main className="grid min-w-0 flex-1 grid-rows-[19px_minmax(0,561fr)_minmax(0,149fr)_minmax(0,225fr)_11px] [&>*]:min-h-0">
          <div className="flex items-center justify-between border-b border-[#c81400] pl-0.5 pr-px text-[12px]">
            <span className="text-[#e8e8e8]">螺纹2005(010605)&lt;周线&gt;</span>
            <div className="flex items-center gap-5 text-[#80b4ff]">
              <a href="#overlay" className="underline">商品叠加</a>
              <a href="#period" className="underline">周期</a>
              <svg className="h-3.5 w-[50px]" viewBox="0 0 50 14">
                <g fill="none" stroke="#80b4ff">
                  <path d="M.5.5h15v13H.5zM17.500.5h15v13h-15zM34.500.5h15v13h-15z" />
                  <path d="M3 7l4-4v2h6v4H7v2zM30 7l-4-4v2h-6v4h6v2zM35 9.500h10M44.500 1v12" />
                  <path d="M47.500 2v11" strokeDasharray="1 2" />
                </g>
              </svg>
            </div>
          </div>
          <section className="relative border-b border-[#c81400]">
            <PricePane />
            <Legend items={priceLegend} />
          </section>
          <section className="relative border-b border-[#c81400]">
            <VolumePane />
            <Legend
              items={[
                ["VOL(5,10)", "text-[#c0c0c0] mr-1"],
                ["VOLUME:2570056.0000", "text-[#c0c0c0] mr-0.5"],
                ["MAVOL1:6854738.0000", "text-white mr-0.5"],
                ["MAVOL2:6047982.0000", "text-[#ffff00]"],
              ]}
            />
          </section>
          <section className="relative border-b border-[#c81400]">
            <MacdPane />
            <Legend
              items={[
                ["MACD(12,26,9)", "text-[#c0c0c0] mr-1"],
                ["DIFF:10.6192", "text-white"],
                ["DEA:7.1477", "text-[#ffff00]"],
                ["MACD:6.9431", "text-[#c0c0c0]"],
              ]}
            />
          </section>
          <svg className="block h-full w-full" viewBox="20 1003 1657 11" preserveAspectRatio="none">
            <g fill="#e8e8e8" fontSize="12">
              <text x="54" y="1014">周线</text>
              {months.map(([x, text]) => (
                <text key={x} x={x} y="1014">
                  {text}
                </text>
              ))}
            </g>
            <path d="M81.500 1003v11" stroke="#c81400" />
          </svg>
        </main>
        <QuotePanel />
      </div>
    </div>
  );
}
